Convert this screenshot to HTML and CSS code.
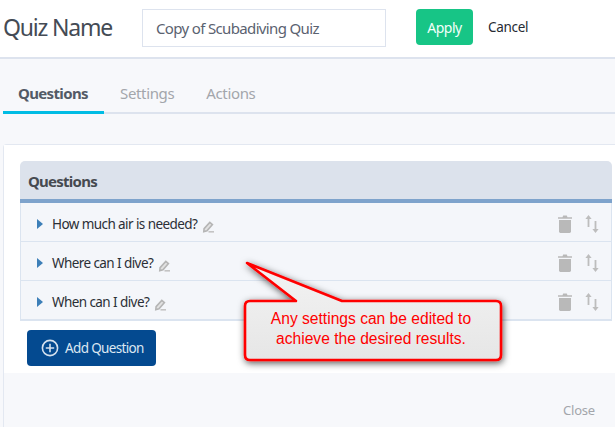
FILE: index.html
```html
<!DOCTYPE html>
<html lang="en">
<head>
<meta charset="utf-8">
<title>Quiz Name</title>
<link rel="stylesheet" href="styles.css">
</head>
<body>
<svg class="defs" width="0" height="0" aria-hidden="true">
  <defs>
    <symbol id="pencil" viewBox="0 0 12 12">
      <path d="M7.8 1.4 10.4 3.6 5 9.8 1.8 10.6 2.1 7.6Z" fill="#e2e2e2" stroke="#b5b5b5" stroke-width="1.6"/>
      <path d="M6.5 10.8H12" stroke="#c4c4c4" stroke-width="1.6"/>
    </symbol>
    <symbol id="trash" viewBox="0 0 14 18">
      <path d="M0 2.2H14V3.8H0ZM4.5 2.2 5.2.6H8.8L9.5 2.2Z" fill="#b9b9b9"/>
      <path d="M1 5H13V16.6Q13 18 11.6 18H2.4Q1 18 1 16.6Z" fill="#b9b9b9"/>
    </symbol>
    <symbol id="sort" viewBox="0 0 14 18">
      <path d="M3.5 0 6.6 4H4.4V12H2.6V4H.4Z" fill="#bdbdbd"/>
      <path d="M10.5 18 7.4 14H9.6V6H11.4V14H13.6Z" fill="#bdbdbd"/>
    </symbol>
  </defs>
</svg>
<header class="topbar">
  <h1 class="quiz-title">Quiz Name</h1>
  <input class="name-input" type="text" value="Copy of Scubadiving Quiz">
  <button class="btn-apply" type="button">Apply</button>
  <a class="cancel-link">Cancel</a>
</header>
<main class="page">
  <nav class="tabs">
    <a class="tab tab-active">Questions</a>
    <a class="tab">Settings</a>
    <a class="tab">Actions</a>
  </nav>
  <section class="card">
    <div class="card-body">
      <div class="panel">
        <h2 class="panel-head">Questions</h2>
        <div class="row">
          <span class="caret"></span><span class="q-text">How much air is needed?</span>
          <svg class="ico-pencil"><use href="#pencil"/></svg>
          <span class="row-actions"><svg class="ico-trash"><use href="#trash"/></svg><svg class="ico-sort"><use href="#sort"/></svg></span>
        </div>
        <div class="row">
          <span class="caret"></span><span class="q-text">Where can I dive?</span>
          <svg class="ico-pencil"><use href="#pencil"/></svg>
          <span class="row-actions"><svg class="ico-trash"><use href="#trash"/></svg><svg class="ico-sort"><use href="#sort"/></svg></span>
        </div>
        <div class="row">
          <span class="caret"></span><span class="q-text">When can I dive?</span>
          <svg class="ico-pencil"><use href="#pencil"/></svg>
          <span class="row-actions"><svg class="ico-trash"><use href="#trash"/></svg><svg class="ico-sort"><use href="#sort"/></svg></span>
        </div>
      </div>
      <button class="btn-add" type="button">
        <svg class="ico-plus" viewBox="0 0 18 18"><circle cx="9" cy="9" r="7.6" fill="none" stroke="#d5e1ee" stroke-width="1.6"/><path d="M9 4.8V13.2M4.8 9H13.2" stroke="#d5e1ee" stroke-width="1.6"/></svg>
        Add Question
      </button>
    </div>
    <footer class="card-foot"><a class="close-link">Close</a></footer>
  </section>
</main>
<aside class="callout">
  <svg class="callout-art" viewBox="0 0 270 112" width="270" height="112">
    <defs>
      <linearGradient id="cg" x1="0" y1="0" x2="0" y2="1"><stop offset="0" stop-color="#f3f3f3"/><stop offset="1" stop-color="#e6e6e6"/></linearGradient>
      <filter id="cs" x="-10%" y="-10%" width="120%" height="125%"><feDropShadow dx="1" dy="2" stdDeviation="3.5" flood-color="#000" flood-opacity=".65"/></filter>
    </defs>
    <path transform="translate(4 3)" d="M0 0 49 38H3Q-2 38 -2 43V92Q-2 97 3 97H249Q254 97 254 92V43Q254 38 249 38H95Z" fill="url(#cg)" stroke="#f00" stroke-width="2.6" stroke-linejoin="round" filter="url(#cs)"/>
  </svg>
  <p class="callout-text">Any settings can be edited to achieve the desired results.</p>
</aside>
</body>
</html>
```
FILE: styles.css
```css
* { box-sizing: border-box; }
html, body { margin: 0; padding: 0; height: 100%; overflow: hidden; background: #fff; }
body { font-family: "Noto Sans", "Open Sans", sans-serif; position: relative; color: #333; }
.defs { position: absolute; }
.topbar { height: 59px; display: flex; align-items: flex-start; border-bottom: 2px solid #dde3ee; padding: 9px 0 0 3px; background: #fff; }
.quiz-title { margin: 2px 0 0; font-size: 23px; line-height: 32px; font-weight: 400; color: #444b55; width: 139px; letter-spacing: -1.2px; }
.name-input { width: 244px; height: 38px; border: 1px solid #dde3ee; padding: 0 12px 0 13px; font: 15px "Noto Sans", sans-serif; color: #5a6270; background: #fff; letter-spacing: -.65px; outline: 0; }
.btn-apply { margin-left: 30px; width: 57px; height: 36px; border: 0; border-radius: 4px; background: #17c586; color: #f2fffa; font: 14px "Noto Sans", sans-serif; letter-spacing: -.5px; padding: 0; }
.cancel-link { margin: 9px 0 0 15px; font-size: 13.5px; line-height: 18px; color: #262a33; letter-spacing: -.3px; }
.page { background: #f7f8fb; height: 368px; padding-left: 3px; }
.tabs { height: 55px; display: flex; border-bottom: 2px solid #dde3ee; padding-top: 23px; }
.tab { width: 101px; padding-left: 15px; font-size: 15px; line-height: 22px; color: #a3a6ab; letter-spacing: -.35px; }
.tab + .tab { width: auto; padding-left: 16px; margin-right: 16px; }
.tab-active { height: 32px; font-weight: 700; color: #535a66; border-bottom: 3px solid #00bce4; letter-spacing: -.65px; }
.card { margin-top: 30px; height: 283px; border: 1px solid #e3e8f1; border-width: 1px 0 0 1px; border-radius: 4px 0 0 0; display: flex; flex-direction: column; }
.card-body { background: #fff; height: 228px; padding: 16px 3px 0 16px; }
.panel-head { margin: 0; height: 42px; background: #dce2ec; border-bottom: 4px solid #7ea3cc; border-radius: 5px 5px 0 0; font-size: 15px; line-height: 41px; padding-left: 8px; font-weight: 700; color: #464a50; letter-spacing: -.75px; }
.row { height: 39px; display: flex; align-items: center; background: #f4f6fa; border: 1px solid #dbe4f0; border-width: 0 1px 1px 1px; padding: 4px 12px 0 16px; }
.row:last-child { height: 40px; border-bottom-width: 2px; }
.caret { width: 0; height: 0; border-left: 6px solid #3d7fb8; border-top: 5px solid transparent; border-bottom: 5px solid transparent; margin-right: 9px; }
.q-text { font-size: 13.5px; color: #2b2f36; letter-spacing: -.58px; }
.ico-pencil { width: 12px; height: 12px; margin-left: 5px; margin-top: 5px; }
.row-actions { margin-left: auto; display: flex; align-items: center; gap: 13px; margin-top: -1px; }
.ico-trash { width: 14px; height: 18px; }
.ico-sort { width: 14px; height: 18px; }
.btn-add { margin: 9px 0 0 7px; width: 129px; height: 36px; display: flex; align-items: center; gap: 6px; background: #044a90; border: 0; border-radius: 4px; padding: 0 0 0 14px; color: #dce7f2; font: 13.5px "Noto Sans", sans-serif; letter-spacing: -.65px; }
.ico-plus { width: 18px; height: 18px; flex: none; }
.card-foot { height: 54px; display: flex; justify-content: flex-end; padding: 28px 20px 0 0; }
.close-link { font-size: 13px; line-height: 18px; color: #a3a6ab; letter-spacing: -.2px; }
.callout { position: absolute; left: 243px; top: 260px; width: 270px; height: 112px; }
.callout-art { position: absolute; inset: 0; overflow: visible; }
.callout-text { position: absolute; left: 4px; top: 49px; width: 248px; margin: 0; text-align: center; font: 15.6px/19.5px "Liberation Sans", Arial, sans-serif; color: #f00; }
```
